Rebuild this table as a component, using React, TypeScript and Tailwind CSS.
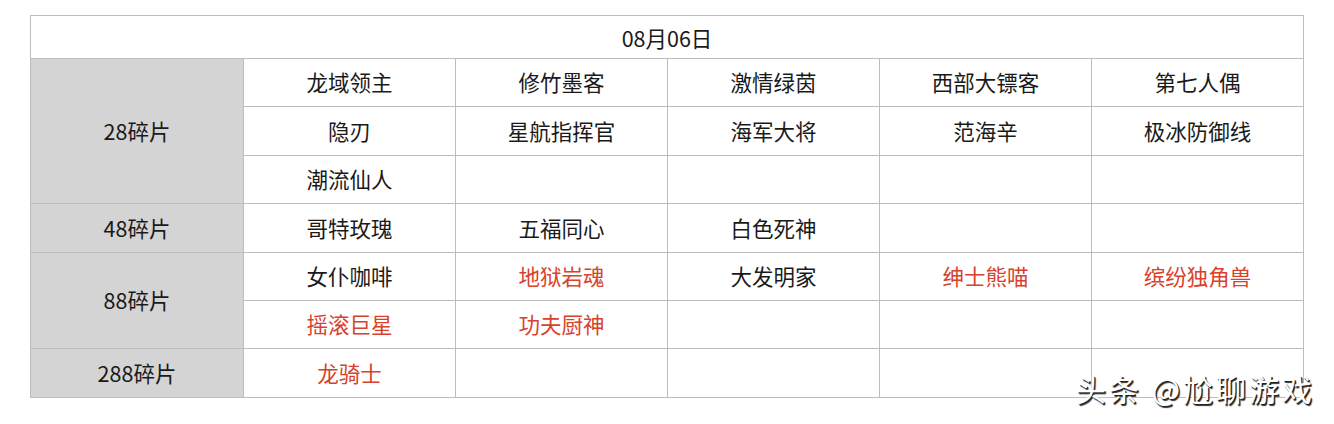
import React from 'react';

type Cell = { text: string; red?: boolean };

// rows of the five right-hand columns; empty string = blank cell
const rows: Cell[][] = [
  [{ text: '龙域领主' }, { text: '修竹墨客' }, { text: '激情绿茵' }, { text: '西部大镖客' }, { text: '第七人偶' }],
  [{ text: '隐刃' }, { text: '星航指挥官' }, { text: '海军大将' }, { text: '范海辛' }, { text: '极冰防御线' }],
  [{ text: '潮流仙人' }, { text: '' }, { text: '' }, { text: '' }, { text: '' }],
  [{ text: '哥特玫瑰' }, { text: '五福同心' }, { text: '白色死神' }, { text: '' }, { text: '' }],
  [{ text: '女仆咖啡' }, { text: '地狱岩魂', red: true }, { text: '大发明家' }, { text: '绅士熊喵', red: true }, { text: '缤纷独角兽', red: true }],
  [{ text: '摇滚巨星', red: true }, { text: '功夫厨神', red: true }, { text: '' }, { text: '' }, { text: '' }],
  [{ text: '龙骑士', red: true }, { text: '' }, { text: '' }, { text: '' }, { text: '' }],
];

// label cells in the grey first column, with their row spans
const labels = [
  { text: '28碎片', row: 'row-start-2 row-span-3' },
  { text: '48碎片', row: 'row-start-5 row-span-1' },
  { text: '88碎片', row: 'row-start-6 row-span-2' },
  { text: '288碎片', row: 'row-start-8 row-span-1' },
];

const rowStarts = ['row-start-2', 'row-start-3', 'row-start-4', 'row-start-5', 'row-start-6', 'row-start-7', 'row-start-8'];
const colStarts = ['col-start-2', 'col-start-3', 'col-start-4', 'col-start-5', 'col-start-6'];

export default function App() {
  return (
    <div
      className="relative w-[1334px] h-[424px] bg-white overflow-hidden"
      style={{ fontFamily: '"Noto Sans CJK SC", "Noto Sans", sans-serif' }}
    >
      <div className="pl-[30px] pt-[15px]">
        <div className="grid w-fit gap-px p-px bg-[#bdbdbd] grid-cols-[212px_211px_211px_211px_211px_211px] grid-rows-[42px_47px_48px_47px_48px_47px_47px_48px]">
          {/* Date header */}
          <div className="col-span-6 row-start-1 flex items-center justify-center bg-white text-[21.5px] text-[#1a1a1a] pt-[3px]">
            08月06日
          </div>

          {labels.map((l) => (
            <div
              key={l.text}
              className={`col-start-1 ${l.row} flex items-center justify-center bg-[#d4d4d4] text-[21.5px] text-[#1a1a1a]`}
            >
              {l.text}
            </div>
          ))}

          {rows.map((r, ri) =>
            r.map((c, ci) => (
              <div
                key={`${ri}-${ci}`}
                className={`${rowStarts[ri]} ${colStarts[ci]} flex items-center justify-center bg-white text-[21.5px] ${
                  c.red ? 'text-[#d8422c]' : 'text-[#1a1a1a]'
                }`}
              >
                {c.text}
              </div>
            ))
          )}
        </div>
      </div>

      {/* Watermark */}
      <div
        className="absolute left-[1076px] top-[366px] text-[30px] text-white tracking-[3px] whitespace-pre"
        style={{ textShadow: '1px 1px 0 #222, 1.5px 1.5px 1px #333' }}
      >
        头条 @尬聊游戏
      </div>
    </div>
  );
}
